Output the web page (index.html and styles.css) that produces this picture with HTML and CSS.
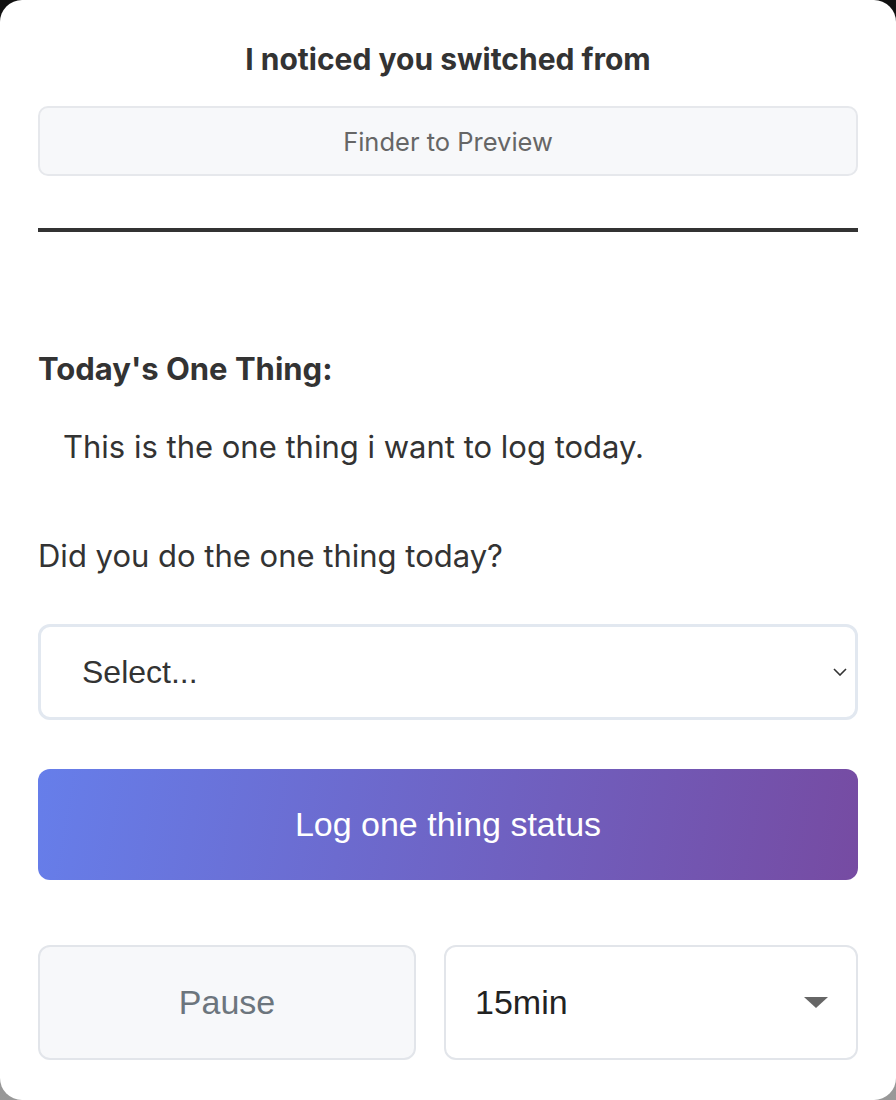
FILE: index.html
```html
<!DOCTYPE html>
<html>
<head>
<meta charset="utf-8">
<link rel="stylesheet" href="styles.css">
</head>
<body>
<div class="window">
  <h1 class="title">I noticed you switched from</h1>
  <div class="switch-box">Finder to Preview</div>
  <hr class="divider">
  <h2 class="label-bold">Today's One Thing:</h2>
  <p class="one-thing">This is the one thing i want to log today.</p>
  <p class="question">Did you do the one thing today?</p>
  <div class="select">
    <span>Select...</span>
    <svg class="chevron" width="14" height="8" viewBox="0 0 14 8"><path d="M1 1 L7 7 L13 1" fill="none" stroke="#333" stroke-width="1.6"/></svg>
  </div>
  <button class="log-btn">Log one thing status</button>
  <div class="bottom-row">
    <button class="pause-btn">Pause</button>
    <div class="duration">
      <span>15min</span>
      <span class="triangle"></span>
    </div>
  </div>
</div>
</body>
</html>
```

FILE: styles.css
```css
html, body {
  margin: 0;
  padding: 0;
}
body {
  width: 896px;
  height: 1100px;
  background: linear-gradient(#111 0%, #555 60%, #999 100%);
  font-family: Inter, "Noto Sans", sans-serif;
  color: #333;
}
.window {
  box-sizing: border-box;
  width: 896px;
  height: 1100px;
  background: #fff;
  border-radius: 22px;
  padding: 40px 38px 0 38px;
  display: flex;
  flex-direction: column;
}
.title {
  margin: 0;
  font-size: 30px;
  font-weight: 700;
  text-align: center;
  line-height: 38px;
  color: #333;
}
.switch-box {
  margin-top: 28px;
  height: 70px;
  box-sizing: border-box;
  background: #f7f8fa;
  border: 2px solid #e6e8ec;
  border-radius: 10px;
  display: flex;
  align-items: center;
  justify-content: center;
  font-size: 25.5px;
  color: #666;
}
.divider {
  margin: 52px 0 0 0;
  border: none;
  height: 4px;
  background: #333;
}
.label-bold {
  margin: 118px 0 0 0;
  font-size: 31px;
  font-weight: 700;
  line-height: 38px;
  color: #333;
}
.one-thing {
  margin: 40px 0 0 25px;
  font-size: 31px;
  line-height: 38px;
  color: #333;
}
.question {
  margin: 71px 0 0 0;
  font-size: 31px;
  line-height: 38px;
  color: #333;
}
.select {
  margin-top: 49px;
  height: 96px;
  box-sizing: border-box;
  border: 3px solid #e2e8f0;
  border-radius: 12px;
  display: flex;
  align-items: center;
  justify-content: space-between;
  padding: 0 8px 0 41px;
  font-family: "Liberation Sans", Arial, sans-serif;
  font-size: 32px;
  color: #333;
}
.chevron {
  display: block;
}
.log-btn {
  margin-top: 49px;
  height: 111px;
  border: none;
  border-radius: 12px;
  background: linear-gradient(100deg, #667eea 0%, #764ba2 100%);
  color: #fff;
  font-family: "Liberation Sans", Arial, sans-serif;
  font-size: 34px;
  padding: 0;
}
.bottom-row {
  margin-top: 65px;
  display: flex;
  gap: 28px;
  height: 115px;
}
.pause-btn {
  width: 378px;
  box-sizing: border-box;
  background: #f7f8fa;
  border: 2px solid #e2e5ea;
  border-radius: 12px;
  color: #6c757d;
  font-family: "Liberation Sans", Arial, sans-serif;
  font-size: 34px;
  padding: 0;
}
.duration {
  flex: 1;
  box-sizing: border-box;
  border: 2px solid #e2e5ea;
  border-radius: 12px;
  background: #fff;
  display: flex;
  align-items: center;
  justify-content: space-between;
  padding: 0 28px 0 29px;
  font-family: "Liberation Sans", Arial, sans-serif;
  font-size: 34px;
  color: #222;
}
.triangle {
  width: 0;
  height: 0;
  border-left: 12px solid transparent;
  border-right: 12px solid transparent;
  border-top: 11px solid #666;
}
```
